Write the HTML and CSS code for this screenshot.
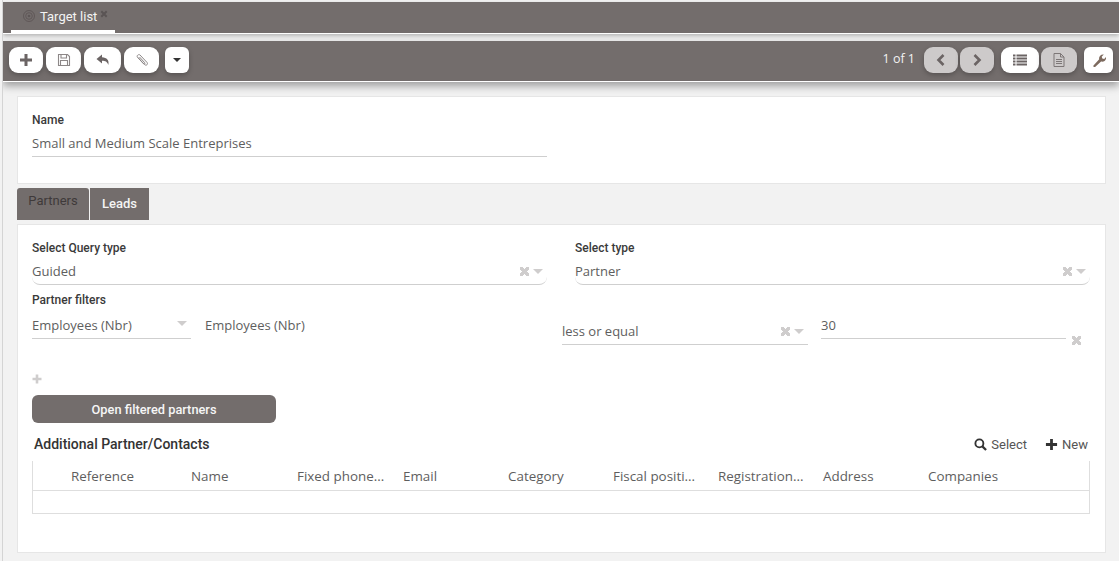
FILE: index.html
```html
<!DOCTYPE html>
<html lang="en">
<head>
  <meta charset="UTF-8">
  <title>Target list</title>
  <link rel="stylesheet" href="styles.css">
</head>
<body>
  <div class="view-tabs">
    <div class="view-tab">
      <svg class="tab-icon" viewBox="0 0 12 12"><circle cx="6" cy="6" r="5.500" fill="none" stroke="#5d5656" stroke-width="0.900"/><circle cx="6" cy="6" r="3.300" fill="none" stroke="#5d5656" stroke-width="0.900"/><circle cx="6" cy="6" r="1.300" fill="#5d5656"/></svg>
      <span>Target list</span>
      <svg class="tab-close" viewBox="0 0 8 8"><path d="M1.300 1.300l5.400 5.400M6.700 1.300L1.300 6.700" stroke="#5a5454" stroke-width="2"/></svg>
    </div>
  </div>

  <div class="toolbar">
    <button class="tool add"><svg viewBox="0 0 14 14" class="ico"><path d="M7 1v12M1 7h12" stroke="#6b6464" stroke-width="3"/></svg></button>
    <button class="tool save"><svg viewBox="0 0 14 14" class="ico"><path d="M1.500 1.500h9l2 2v9h-11z" fill="none" stroke="#8d8888" stroke-width="1.100"/><path d="M4 1.500v3.500h5.500v-3.500M3.500 12.500v-5h7v5" fill="none" stroke="#8d8888" stroke-width="1.100"/></svg></button>
    <button class="tool back"><svg viewBox="0 0 14 14" class="ico"><path d="M6 1.500L.5 6l5.500 4.500V7.800c3.300 0 5.300.9 6.300 4.200 1.200-4.800-1.500-7.600-6.300-7.800z" fill="#6b6464"/></svg></button>
    <button class="tool clip"><svg viewBox="0 0 14 14" class="ico"><path d="M3 4.500l6.500 7c1.800 1.800 4-.4 2.400-2.200L5 2C3.800.8 1.200 2.600 2.500 4.200l6 6.600c.8.8 1.900-.2 1.200-1.100L4.500 4" fill="none" stroke="#8d8888" stroke-width="1"/></svg></button>
    <button class="tool caret-btn"><span class="caret-dark"></span></button>

    <div class="pager">
      <span class="pager-text">1 of 1</span>
      <div class="tool-group">
        <button class="tool off"><svg viewBox="0 0 14 14" class="ico"><path d="M9.500 2L4.500 7l5 5" fill="none" stroke="#6b6464" stroke-width="2.600"/></svg></button>
        <button class="tool off"><svg viewBox="0 0 14 14" class="ico"><path d="M4.500 2l5 5-5 5" fill="none" stroke="#6b6464" stroke-width="2.600"/></svg></button>
      </div>
      <div class="tool-group views">
        <button class="tool list"><svg viewBox="0 0 14 14" class="ico"><path d="M0 2.500h2.500M3.500 2.500H14M0 5.500h2.500M3.500 5.500H14M0 8.500h2.500M3.500 8.500H14M0 11.500h2.500M3.500 11.500H14" stroke="#6b6464" stroke-width="2"/></svg></button>
        <button class="tool doc off"><svg viewBox="0 0 14 14" class="ico"><path d="M2 .5h6.500L12 4v9.500H2z" fill="none" stroke="#7d7777" stroke-width="1"/><path d="M8.500.5V4H12M4 6.500h6M4 8.500h6M4 10.500h6" fill="none" stroke="#7d7777" stroke-width="1"/></svg></button>
      </div>
      <button class="tool wrench"><svg viewBox="0 0 14 14" class="ico"><path d="M1.500 12.500L7.200 6.300C6.500 3.800 8.700 1 11.800 1.500L9.700 3.700l.6 1.800 1.900.5 1.900-2c.4 3-2.300 5.300-5 4.500l-6 5.500c-1 .7-2.300-.5-1.600-1.500z" fill="#7d6a5e"/></svg></button>
    </div>
  </div>

  <section class="panel name-panel">
    <label class="field-label">Name</label>
    <div class="value-line name-value">Small and Medium Scale Entreprises</div>
  </section>

  <div class="form-tabs">
    <div class="form-tab active">Partners</div>
    <div class="form-tab">Leads</div>
  </div>

  <section class="panel main-panel">
    <div class="two-cols">
      <div class="col">
        <label class="field-label">Select Query type</label>
        <div class="value-line select-line round">Guided <span class="sel-icons"><i class="x-mark"></i><i class="caret"></i></span></div>
      </div>
      <div class="col">
        <label class="field-label">Select type</label>
        <div class="value-line select-line round">Partner <span class="sel-icons"><i class="x-mark"></i><i class="caret"></i></span></div>
      </div>
    </div>

    <label class="field-label filters-label">Partner filters</label>
    <div class="filter-row">
      <div class="value-line field-pick">Employees (Nbr) <span class="sel-icons"><i class="caret"></i></span></div>
      <div class="field-name">Employees (Nbr)</div>
      <div class="value-line operator">less or equal <span class="sel-icons"><i class="x-mark"></i><i class="caret"></i></span></div>
      <div class="value-line amount">30</div>
      <i class="x-mark row-remove"></i>
    </div>

    <svg class="add-filter" viewBox="0 0 10 10"><path d="M5 .5v9M.5 5h9" stroke="#cfcdcd" stroke-width="2.600"/></svg>
    <button class="open-btn">Open filtered partners</button>

    <div class="grid-head">
      <h2>Additional Partner/Contacts</h2>
      <div class="grid-actions">
        <span class="grid-action"><svg viewBox="0 0 14 14" class="action-ico"><circle cx="5.800" cy="5.800" r="4.300" fill="none" stroke="#333" stroke-width="2"/><path d="M9 9l4 4" stroke="#333" stroke-width="2.400"/></svg>Select</span>
        <span class="grid-action"><svg viewBox="0 0 14 14" class="action-ico"><path d="M7 1v12M1 7h12" stroke="#333" stroke-width="3"/></svg>New</span>
      </div>
    </div>

    <div class="grid">
      <div class="grid-row head">
        <span>Reference</span><span>Name</span><span>Fixed phone...</span><span>Email</span><span>Category</span><span>Fiscal positi...</span><span>Registration...</span><span>Address</span><span>Companies</span>
      </div>
      <div class="grid-row empty"></div>
    </div>
  </section>
</body>
</html>
```

FILE: styles.css
```css
* {
  margin: 0;
  padding: 0;
  box-sizing: border-box;
}

html {
  background: #f2f2f2;
}

body {
  height: 561px;
  overflow: hidden;
  background: #f2f2f2;
  border-left: 1px solid #d4d4d4;
  margin-left: 2px;
  font-family: "Open Sans", sans-serif;
  font-size: 13px;
  color: #555;
}

.view-tabs {
  height: 32px;
  margin-top: 2px;
  background: #736d6c;
  border-bottom: 1px solid #fff;
  box-shadow: 0 2px 4px rgba(0, 0, 0, 0.25);
  padding-left: 8px;
}

.view-tab {
  width: 104px;
  height: 31px;
  border-bottom: 3px solid #fff;
  display: flex;
  align-items: flex-start;
  padding: 7px 0 0 12px;
  font-family: Roboto, sans-serif;
  font-size: 13px;
  color: #f4f4f4;
}

.tab-icon {
  width: 12px;
  height: 12px;
  margin: 1px 5px 0 0;
}

.tab-close {
  width: 8px;
  height: 8px;
  margin: 1px 0 0 3px;
}

.toolbar {
  height: 41px;
  margin-top: 7px;
  background: #736d6c;
  border-bottom: 1px solid #fff;
  box-shadow: 0 4px 8px rgba(0, 0, 0, 0.35);
  display: flex;
  align-items: flex-start;
  padding: 6px 6px 0 6px;
  gap: 3px;
}

.tool {
  width: 34px;
  height: 26px;
  border: none;
  border-radius: 9px;
  background: #fff;
  box-shadow: 0 2px 5px rgba(0, 0, 0, 0.25);
  display: flex;
  align-items: center;
  justify-content: center;
}

.tool.save {
  width: 35px;
}

.tool.back {
  width: 37px;
}

.tool.clip {
  width: 35px;
}

.tool.list {
  width: 38px;
}

.tool.doc {
  width: 36px;
}

.tool.off {
  background: #cdcaca;
}

.caret-btn {
  width: 24px;
  margin-left: 3px;
  border-radius: 6px;
}

.caret-dark {
  border-left: 4px solid transparent;
  border-right: 4px solid transparent;
  border-top: 4px solid #333;
}

.ico {
  width: 14px;
  height: 14px;
}

.pager {
  margin-left: auto;
  display: flex;
  align-items: flex-start;
}

.pager-text {
  margin: 3px 9px 0 0;
  font-size: 12.500px;
  line-height: 17px;
  color: #f2f2f2;
}

.tool-group {
  display: flex;
  gap: 2px;
}

.views {
  margin-left: 7px;
}

.wrench {
  width: 29px;
  margin-left: 7px;
  border-radius: 6px;
}

.panel {
  background: #fff;
  border: 1px solid #e6e6e6;
  margin: 0 13px 0 14px;
}

.name-panel {
  height: 88px;
  margin-top: 14px;
  padding: 16px 14px 0;
}

.field-label {
  display: block;
  font-family: Roboto, sans-serif;
  font-size: 12px;
  font-weight: 500;
  line-height: 14px;
  color: #3a3a3a;
}

.value-line {
  height: 26px;
  line-height: 24px;
  border-bottom: 1px solid #cfcfcf;
  color: #5e5e5e;
  position: relative;
}

.name-value {
  width: 515px;
  margin-top: 4px;
}

.form-tabs {
  display: flex;
  gap: 1px;
  margin: 4px 0 0 14px;
  height: 32px;
}

.form-tab {
  width: 59px;
  background: #736d6c;
  color: #f4f4f4;
  font-family: Roboto, sans-serif;
  font-size: 13px;
  font-weight: 500;
  text-align: center;
  line-height: 32px;
}

.form-tab.active {
  width: 72px;
  color: #3f3a3a;
  font-weight: 400;
  line-height: 25px;
  border-radius: 3px 3px 0 0;
}

.main-panel {
  height: 329px;
  margin-top: 4px;
  padding: 16px 14px 0;
}

.two-cols {
  display: grid;
  grid-template-columns: 515px 515px;
  column-gap: 28px;
}

.select-line {
  margin-top: 4px;
}

.round {
  border-radius: 0 0 8px 8px;
}

.sel-icons {
  position: absolute;
  right: 4px;
  top: 8px;
  display: flex;
  align-items: center;
  gap: 4px;
}

.x-mark {
  display: block;
  width: 9px;
  height: 9px;
  background:
    linear-gradient(45deg, transparent 38%, #cfcdcd 38%, #cfcdcd 62%, transparent 62%),
    linear-gradient(-45deg, transparent 38%, #cfcdcd 38%, #cfcdcd 62%, transparent 62%);
}

.caret {
  display: block;
  border-left: 5px solid transparent;
  border-right: 5px solid transparent;
  border-top: 5px solid #cfcdcd;
}

.filters-label {
  margin-top: 8px;
}

.filter-row {
  display: flex;
  align-items: flex-start;
  margin-top: 6px;
}

.field-pick {
  width: 159px;
  flex: none;
}

.field-name {
  width: 357px;
  margin-left: 14px;
  line-height: 24px;
  color: #5e5e5e;
  flex: none;
}

.operator {
  width: 246px;
  margin-top: 6px;
  flex: none;
}

.amount {
  width: 245px;
  margin-left: 13px;
  flex: none;
}

.row-remove {
  margin: 23px 0 0 6px;
}

.add-filter {
  display: block;
  width: 10px;
  height: 10px;
  margin-top: 29px;
}

.open-btn {
  display: block;
  width: 244px;
  height: 28px;
  margin-top: 11px;
  border: none;
  border-radius: 6px;
  background: #736d6c;
  color: #f6f6f6;
  font-family: Roboto, sans-serif;
  font-size: 12.800px;
  font-weight: 500;
}

.grid-head {
  display: flex;
  justify-content: space-between;
  align-items: center;
  margin-top: 12px;
  height: 18px;
  width: 1056px;
}

.grid-head h2 {
  margin-left: 2px;
  font-family: Roboto, sans-serif;
  font-size: 14px;
  font-weight: 500;
  color: #333;
}

.grid-actions {
  display: flex;
  gap: 18px;
  font-family: Roboto, sans-serif;
  font-size: 13px;
  color: #555;
}

.grid-action {
  display: flex;
  align-items: center;
  gap: 4px;
}

.action-ico {
  width: 13px;
  height: 13px;
}

.grid {
  width: 1058px;
  margin-top: 8px;
  border-left: 1px solid #dedede;
  border-right: 1px solid #dedede;
  border-bottom: 1px solid #dedede;
}

.grid-row {
  display: grid;
  grid-template-columns: 120px 106px 106px repeat(6, 105px);
  padding-left: 38px;
}

.grid-row.head {
  height: 30px;
  line-height: 30px;
  font-size: 13.400px;
  border-bottom: 1px solid #dedede;
  color: #5e5e5e;
}

.grid-row.empty {
  height: 22px;
}
```
